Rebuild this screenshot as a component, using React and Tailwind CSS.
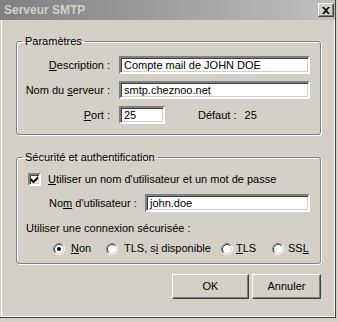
import React from "react";

const sunken =
  "border-2 border-t-[#808080] border-l-[#808080] border-b-white border-r-white shadow-[inset_1px_1px_0_#404040,inset_-1px_-1px_0_#d4d0c8]";

const TextBox = ({ value, className = "" }) => (
  <div className={`h-[18px] bg-white ${sunken} flex items-center pl-[3px] ${className}`}>
    <span className="leading-[13px] whitespace-nowrap">{value}</span>
  </div>
);

const Radio = ({ checked }) => (
  <svg width="12" height="12" viewBox="0 0 12 12" className="shrink-0">
    <circle cx="6" cy="6" r="5" fill="white" />
    <path d="M2.11 9.89 A5.5 5.5 0 0 1 9.89 2.11" fill="none" stroke="#808080" strokeWidth="1" />
    <path d="M9.89 2.11 A5.5 5.5 0 0 1 2.11 9.89" fill="none" stroke="#ffffff" strokeWidth="1" />
    <path d="M2.82 9.18 A4.5 4.5 0 0 1 9.18 2.82" fill="none" stroke="#404040" strokeWidth="1" />
    <path d="M9.18 2.82 A4.5 4.5 0 0 1 2.82 9.18" fill="none" stroke="#d4d0c8" strokeWidth="1" />
    {checked && <circle cx="6" cy="6" r="2" fill="black" />}
  </svg>
);

const Button = ({ children, className = "" }) => (
  <div
    className={`h-[25px] flex items-center justify-center bg-[#d4d0c8] border border-t-white border-l-white border-b-[#404040] border-r-[#404040] shadow-[inset_-1px_-1px_0_#808080] ${className}`}
  >
    {children}
  </div>
);

const Group = ({ title, children, className = "" }) => (
  <fieldset
    className={`w-[305px] border border-[#808080] rounded-[3px] shadow-[1px_1px_0_#fff,inset_1px_1px_0_#fff] px-[5px] ${className}`}
  >
    <legend className="px-[3px] leading-[13px]">{title}</legend>
    {children}
  </fieldset>
);

export default function App() {
  return (
    <div className="w-[338px] h-[322px] bg-[#d4d0c8] font-['Liberation_Sans',sans-serif] text-[11px] leading-[13px] text-black">
      <div className="w-[336px] h-[318px] flex flex-col border-r border-b border-[#404040]">
        {/* title bar */}
        <div className="h-[20px] shrink-0 flex items-center justify-between pl-[4px] pr-[1px] bg-gradient-to-r from-[#808080] to-[#c0c0c0]">
          <span className="font-bold text-[12px] text-[#d4d0c8]">Serveur SMTP</span>
          <div className="w-[16px] h-[14px] flex items-center justify-center bg-[#d4d0c8] border border-t-white border-l-white border-b-[#404040] border-r-[#404040] shadow-[inset_-1px_-1px_0_#808080]">
            <svg width="8" height="7" viewBox="0 0 8 7">
              <path d="M0 0h2l2 2 2-2h2L5 3.5 8 7H6L4 5 2 7H0l3-3.5z" fill="black" />
            </svg>
          </div>
        </div>

        <div className="flex-1 ml-[1px] border-l border-white border-r border-b border-[#808080] border-l-white pl-[14px] pt-[15px]">
          {/* Paramètres */}
          <Group title="Paramètres" className="pb-[10px]">
            <div className="mt-[8px] flex flex-col gap-[7px]">
              <div className="flex items-center">
                <span className="w-[88px] text-right">
                  <u>D</u>escription :
                </span>
                <TextBox value="Compte mail de JOHN DOE" className="ml-[9px] w-[191px]" />
              </div>
              <div className="flex items-center">
                <span className="w-[88px] text-right whitespace-nowrap">
                  Nom du <u>s</u>erveur :
                </span>
                <TextBox value="smtp.cheznoo.net" className="ml-[9px] w-[191px]" />
              </div>
              <div className="flex items-center">
                <span className="w-[88px] text-right">
                  <u>P</u>ort :
                </span>
                <TextBox value="25" className="ml-[9px] w-[46px]" />
                <span className="ml-[33px]">Défaut :</span>
                <span className="ml-[8px]">25</span>
              </div>
            </div>
          </Group>

          {/* Sécurité */}
          <Group title="Sécurité et authentification" className="mt-[16px] pb-[8px]">
            <div className="mt-[9px] ml-[6px] flex items-center gap-[7px]">
              <div className={`w-[13px] h-[13px] bg-white ${sunken} flex items-center justify-center`}>
                <svg width="7" height="7" viewBox="0 0 7 7">
                  <path d="M0 2v3l2 2h1l4-4V0L2.5 4.5z" fill="black" />
                </svg>
              </div>
              <span>
                <u>U</u>tiliser un nom d'utilisateur et un mot de passe
              </span>
            </div>
            <div className="mt-[8px] ml-[27px] flex items-center">
              <span className="w-[96px] whitespace-nowrap">
                No<u>m</u> d'utilisateur :
              </span>
              <TextBox value="john.doe" className="w-[165px]" />
            </div>
            <div className="mt-[10px] ml-[4px]">Utiliser une connexion sécurisée :</div>
            <div className="mt-[7px] ml-[31px] flex items-center">
              <div className="w-[53px] flex items-center gap-[6px]">
                <Radio checked />
                <span>
                  <u>N</u>on
                </span>
              </div>
              <div className="w-[115px] flex items-center gap-[6px]">
                <Radio />
                <span>
                  TLS, s<u>i</u> disponible
                </span>
              </div>
              <div className="w-[51px] flex items-center gap-[3px]">
                <Radio />
                <span>
                  <u>T</u>LS
                </span>
              </div>
              <div className="flex items-center gap-[4px]">
                <Radio />
                <span>
                  SS<u>L</u>
                </span>
              </div>
            </div>
          </Group>

          {/* buttons */}
          <div className="w-[305px] mt-[10px] flex justify-end gap-[3px]">
            <Button className="w-[77px]">OK</Button>
            <Button className="w-[69px]">Annuler</Button>
          </div>
        </div>
      </div>
    </div>
  );
}
